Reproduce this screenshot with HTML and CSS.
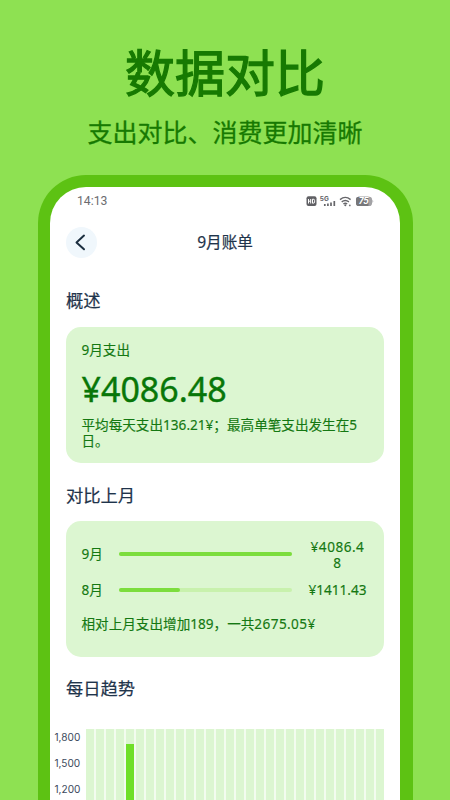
FILE: index.html
```html
<!DOCTYPE html>
<html lang="zh-CN">
<head>
<meta charset="utf-8">
<title>数据对比</title>
<link rel="stylesheet" href="styles.css">
</head>
<body>
<header class="hero">
  <h1>数据对比</h1>
  <p>支出对比、消费更加清晰</p>
</header>
<main class="phone">
  <div class="status">
    <span class="time">14:13</span>
    <svg class="status-icons" width="70" height="14" viewBox="0 0 70 14">
      <rect x="0.500" y="2.200" width="10" height="9.800" rx="2" fill="#606064"/>
      <path d="M2.500 5v4.500M4.700 5v4.500M2.500 7.200h2.200M6.500 5.200v4h.7q1.400 0 1.400-1.300v-1.400q0-1.300-1.400-1.300z" fill="none" stroke="#fff" stroke-width="1"/>
      <text class="net" x="13.800" y="6.600">5G</text>
      <path d="M18.800 12v-2M21.900 12V9.500M25 12V8.500M28.300 12V7" stroke="#66666a" stroke-width="1.700"/>
      <g fill="none" stroke="#66666a" stroke-width="1.400">
        <path d="M34 5.600q5.300-4.400 10.600 0M35.700 7.900q3.600-2.800 7.200 0M37.400 10q1.900-1.400 3.800 0"/>
      </g>
      <circle cx="39.300" cy="11.300" r="1" fill="#66666a"/>
      <circle cx="43.800" cy="11.400" r=".9" fill="#77777a"/>
      <rect x="50" y="2.700" width="16" height="9.300" rx="2.800" fill="#a2a2a5"/>
      <path d="M52.800 2.700H62.500V12H52.800A2.800 2.800 0 0 1 50 9.200V5.500A2.800 2.800 0 0 1 52.800 2.700z" fill="#77777a"/>
      <path d="M66.500 5.500q1.600 1.900 0 3.700z" fill="#99999c"/>
      <text class="battery" x="52.800" y="10.300">75</text>
    </svg>
  </div>
  <nav class="nav">
    <span class="back"><svg width="31" height="31" viewBox="0 0 31 31"><path d="M18 8.600L10.500 15.400l7.500 6.900" fill="none" stroke="#1c2f40" stroke-width="2" stroke-linecap="round" stroke-linejoin="round"/></svg></span>
    <span class="nav-title">9月账单</span>
  </nav>
  <h2>概述</h2>
  <section class="card overview">
    <p class="label">9月支出</p>
    <p class="amount">¥4086.48</p>
    <p class="note">平均每天支出136.21¥；最高单笔支出发生在5<br>日。</p>
  </section>
  <h2>对比上月</h2>
  <section class="card compare">
    <div class="row"><span class="month">9月</span><span class="track"><i style="width:100%"></i></span><span class="value wrapped">¥4086.4<br>8</span></div>
    <div class="row"><span class="month">8月</span><span class="track"><i style="width:35.5%"></i></span><span class="value">¥1411.43</span></div>
    <p class="summary">相对上月支出增加189，一共<span class="total">2675.05¥</span></p>
  </section>
  <h2>每日趋势</h2>
  <section class="chart">
    <div class="axis"><span>1,800</span><span>1,500</span><span>1,200</span></div>
    <div class="bars">
      <b></b><b></b><b></b><b></b><b><i></i></b><b></b><b></b><b></b><b></b><b></b>
      <b></b><b></b><b></b><b></b><b></b><b></b><b></b><b></b><b></b><b></b>
      <b></b><b></b><b></b><b></b><b></b><b></b><b></b><b></b><b></b><b></b>
    </div>
  </section>
</main>
</body>
</html>
```
FILE: styles.css
```css
* { box-sizing: border-box; margin: 0; padding: 0; }
body {
  width: 450px;
  height: 800px;
  overflow: hidden;
  background: #8ee152;
  font-family: "Noto Sans", "Noto Sans CJK SC", sans-serif;
  color: #1f344b;
}
.hero { height: 175px; padding-top: 43px; text-align: center; color: #177a02; }
.hero h1 { font-size: 50px; line-height: 60px; font-weight: 400; -webkit-text-stroke: 1.3px #177a02; }
.hero p { font-size: 25px; line-height: 32px; margin-top: 13px; -webkit-text-stroke: .3px #177a02; }
.phone {
  width: 375px;
  height: 625px;
  overflow: hidden;
  margin-left: 38px;
  padding: 0 16px;
  border: 12px solid #5dc213;
  border-right-width: 13px;
  border-bottom: 0;
  border-radius: 48px 48px 0 0;
  background: #fff;
}
.status { height: 28px; display: flex; justify-content: space-between; align-items: center; padding: 0 8.5px 0 11px; }
.time { font-family: Roboto, sans-serif; font-size: 12.2px; color: #6c6c6f; }
.net { font: 700 6.5px Inter, sans-serif; fill: #66666a; }
.battery { font: italic 700 8.5px Inter, sans-serif; letter-spacing: -.3px; fill: #fff; }
.nav { display: flex; align-items: center; height: 54px; }
.back { width: 31px; height: 31px; border-radius: 50%; background: #f0f7fc; }
.nav-title { flex: 1; margin-right: 31px; text-align: center; font-size: 15.6px; line-height: 24px; -webkit-text-stroke: .2px #1f344b; }
h2 { font-size: 17.3px; line-height: 24px; font-weight: 400; -webkit-text-stroke: .2px #1f344b; }
.nav + h2 { margin-top: 20px; }
.card { width: 318px; height: 136px; border-radius: 15px; background: #dcf6d1; color: #147812; padding: 0 15.5px; white-space: nowrap; font-size: 13.6px; line-height: 16px; -webkit-text-stroke: .15px #147812; }
.overview { margin: 13.5px 0 21px; padding-top: 15px; }
.amount { font-size: 34px; line-height: 40px; margin-top: 11px; color: #087608; -webkit-text-stroke: .4px #087608; }
.note { margin-top: 8px; }
.compare { margin: 13.5px 0 20px; padding-top: 15.5px; }
.row { display: flex; align-items: center; height: 35.5px; }
.month { width: 37px; }
.track { width: 173px; height: 4px; border-radius: 2px; background: #c8f1ad; }
.track i { display: block; height: 4px; border-radius: 2px; background: #7cdd3d; }
.value { width: 62px; margin-left: 15px; text-align: center; }
.wrapped { letter-spacing: .5px; padding-top: 1px; }
.summary { margin-top: 8px; }
.total { letter-spacing: .4px; }
.chart { display: flex; margin: 28px 0 0 -11.5px; height: 80px; }
.axis { flex: none; width: 31px; font-family: Inter, sans-serif; font-size: 10.1px; line-height: 26.3px; margin-top: -5.5px; color: #3c4a5d; }
.axis span { display: block; }
.bars { flex: none; display: grid; grid-template-columns: repeat(30, 8px); column-gap: 2px; background: #f3fcef; }
.bars b { background: #dcf6d1; }
.bars i { display: block; margin-top: 15px; height: 65px; background: #70df29; }
```
